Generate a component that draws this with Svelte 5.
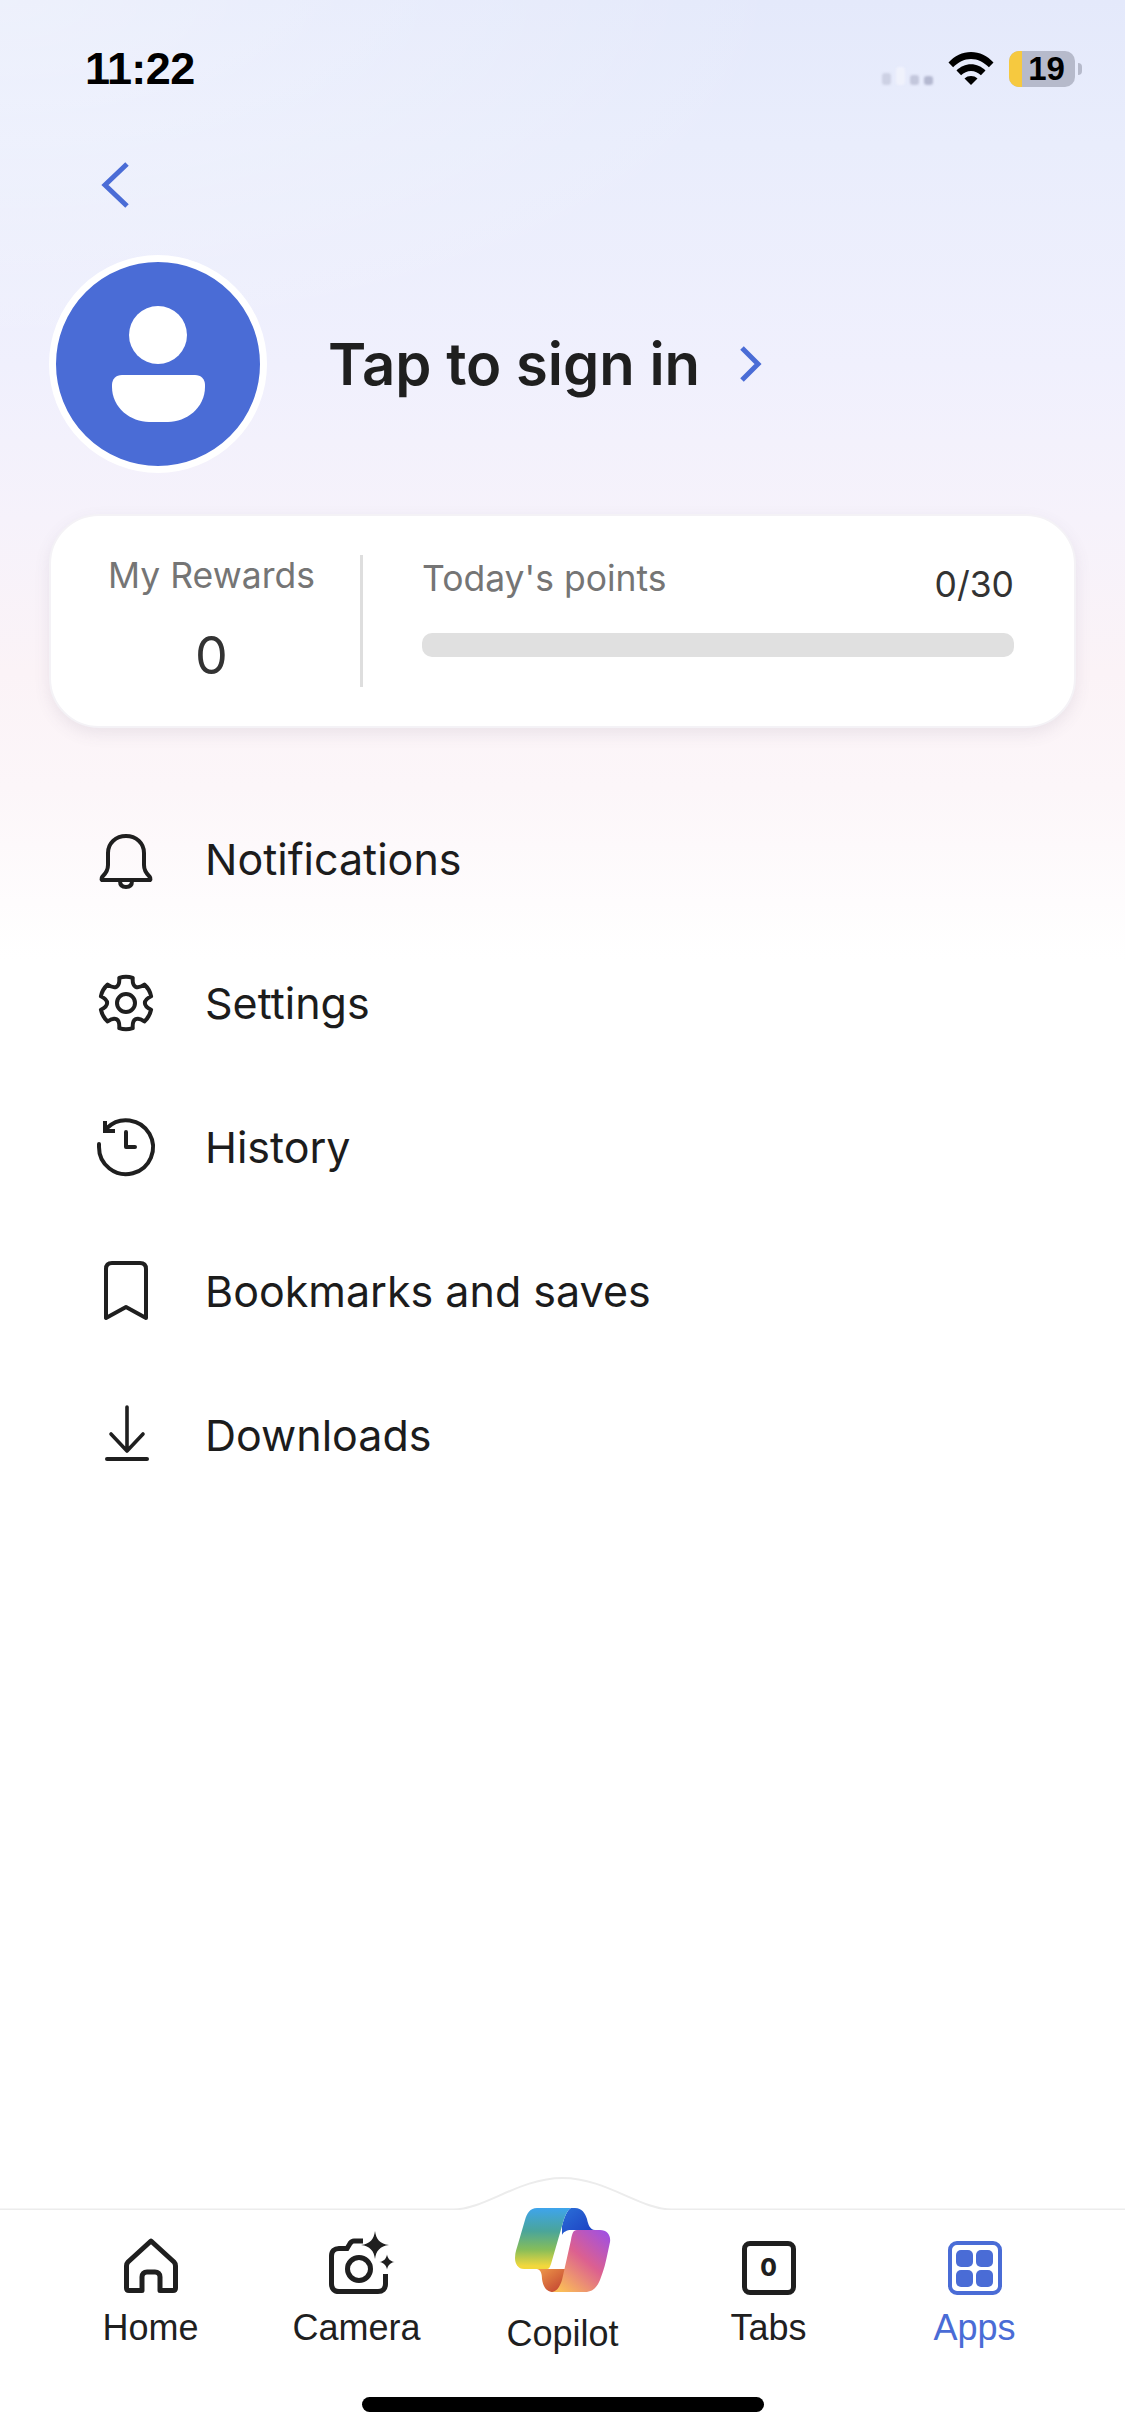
<script>
  const rows = [
    { label: 'Notifications', icon: 'bell' },
    { label: 'Settings', icon: 'gear' },
    { label: 'History', icon: 'history' },
    { label: 'Bookmarks and saves', icon: 'bookmark' },
    { label: 'Downloads', icon: 'download' }
  ];
  const polar = (r, deg) => {
    const t = (deg * Math.PI) / 180;
    return (30 + r * Math.cos(t)).toFixed(2) + ' ' + (30 + r * Math.sin(t)).toFixed(2);
  };
  const gearPath = (() => {
    let d = 'M' + polar(26, -90 - 15);
    for (let i = 0; i < 6; i++) {
      const a = -90 + i * 60;
      d += 'Q' + polar(27.4, a) + ' ' + polar(26, a + 15);
      d += 'C' + polar(17, a + 21) + ' ' + polar(17, a + 39) + ' ' + polar(26, a + 45);
    }
    return d + 'Z';
  })();
</script>

<div class="page">
  <div class="bg"></div>

  <header class="status">
    <span class="time">11:22</span>
    <div class="status-right">
      <div class="signal"><i class="s1"></i><i class="s2"></i><i class="s3"></i><i class="s4"></i></div>
      <svg class="wifi" width="46" height="34" viewBox="0 0 46 34">
        <path d="M0.5 11.5C6.5 5 14.5 1 23 1s16.5 4 22.5 10.5l-4.6 4.8C36 11.4 29.8 8 23 8S10 11.4 5.100 16.300Z" fill="#000"/>
        <path d="M8.500 19.500C12.300 15.700 17.500 13.300 23 13.300s10.700 2.400 14.500 6.200l-4.600 4.700C30.200 21.700 26.800 20 23 20s-7.200 1.700-9.900 4.200Z" fill="#000"/>
        <path d="M16.500 27.500C18.300 25.800 20.500 25 23 25s4.700 .8 6.500 2.500L23 34Z" fill="#000"/>
      </svg>
      <div class="battery">
        <div class="batt-body"><span class="batt-fill"></span><span class="batt-num">19</span></div>
        <span class="batt-cap"></span>
      </div>
    </div>
  </header>

  <button class="back" aria-label="Back">
    <svg width="30" height="46" viewBox="0 0 30 46" fill="none"><path d="M27 2 5 23l22 21" stroke="#4a6cd6" stroke-width="5"/></svg>
  </button>

  <section class="profile">
    <div class="avatar">
      <svg width="204" height="204" viewBox="0 0 204 204">
        <circle cx="102" cy="73" r="29" fill="#fff"/>
        <path d="M66 113H139C145 113 149 117 149 123V125C149 146 130 160 112 160H93C75 160 56 146 56 125V123C56 117 60 113 66 113Z" fill="#fff"/>
      </svg>
    </div>
    <span class="signin">Tap to sign in</span>
    <svg class="chev" width="24" height="36" viewBox="0 0 24 36" fill="none"><path d="M4 2l16 16L4 34" stroke="#4a6cd6" stroke-width="5"/></svg>
  </section>

  <section class="card">
    <div class="rewards">
      <span class="muted">My Rewards</span>
      <span class="zero">0</span>
    </div>
    <div class="divider"></div>
    <div class="points">
      <div class="points-top">
        <span class="muted">Today's points</span>
        <span class="count">0/30</span>
      </div>
      <div class="bar"></div>
    </div>
  </section>

  <nav class="menu">
    {#each rows as row}
      <div class="row">
        <span class="icon">
          <svg width="60" height="60" viewBox="0 0 60 60" fill="none" stroke="#1f1f1f" stroke-width="4" stroke-linecap="round" stroke-linejoin="round">
            {#if row.icon === 'bell'}
              <path d="M6 51C5 50 6 48 7 47C10 44 12 41 12 36V24C12 14 20 7 30 7S48 14 48 24V36C48 41 50 44 53 47C54 48 55 50 54 51Z"/>
              <path d="M24 52C24 56 26 58 30 58S36 56 36 52"/>
            {:else if row.icon === 'gear'}
              <path d={gearPath}/>
              <circle cx="30" cy="30" r="9"/>
            {:else if row.icon === 'history'}
              <path d="M3 27V30A27 27 0 1 0 11 11"/>
              <path d="M9 4V14H19" stroke-linecap="butt" stroke-linejoin="miter"/>
              <path d="M30 15V30H39"/>
            {:else if row.icon === 'bookmark'}
              <path d="M10 57V8C10 4 12 2 16 2H44C48 2 50 4 50 8V57L30 46Z"/>
            {:else}
              <path d="M31 2V46M15 29 31 46 47 29" stroke-width="3.600"/>
              <path d="M11 54H51"/>
            {/if}
          </svg>
        </span>
        <span class="label">{row.label}</span>
      </div>
    {/each}
  </nav>

  <div class="spacer"></div>

  <footer class="tabbar">
    <svg class="bump" width="1125" height="36" viewBox="0 0 1125 36" fill="none">
      <path d="M0 35.500H453c32 0 66-31.500 109.500-31.500s77.500 31.500 109.500 31.500H1125" stroke="#ececec" stroke-width="2"/>
    </svg>
    <div class="tabs">
      <div class="tab">
        <div class="slot">
          <svg width="60" height="60" viewBox="0 0 60 60" fill="none" stroke="#1f1f1f" stroke-width="5" stroke-linejoin="round">
            <path d="M30 6 7 27C5.500 28.500 5.500 29.500 5.500 31V53C5.500 54.500 6.500 55.500 8 55.500H21V42C21 39 23 37 26 37H34C37 37 39 39 39 42V55.500H52C53.500 55.500 54.500 54.500 54.500 53V31C54.500 29.500 54.500 28.500 53 27Z"/>
          </svg>
        </div>
        <span>Home</span>
      </div>
      <div class="tab">
        <div class="slot">
          <svg class="cam" width="68" height="64" viewBox="0 0 68 64" fill="none" stroke="#1f1f1f" stroke-width="5">
            <path d="M58.500 43V53C58.500 58 55.500 60.500 51 60.500H12C7 60.500 4.500 57.500 4.500 53V25C4.500 20 7.500 17.500 12 17.500H20L23 12.500C24 11 25 10 27 10H36"/>
            <circle cx="32" cy="38" r="11.500"/>
            <path d="M48 0C49 8 53 13 62 14C53 15 49 20 48 28C47 20 43 15 34 14C43 13 47 8 48 0Z" fill="#1f1f1f" stroke="none"/>
            <path d="M60 23.500C60.500 27 63 30.500 67.500 31C63 31.500 60.500 35 60 38.500C59.500 35 57 31.500 52.500 31C57 30.500 59.500 27 60 23.500Z" fill="#1f1f1f" stroke="none"/>
          </svg>
        </div>
        <span>Camera</span>
      </div>
      <div class="tab copilot">
        <div class="slot">
          <svg width="96" height="84" viewBox="0 0 96 84">
            <defs>
              <linearGradient id="cL" x1="0" y1="0" x2="0" y2="1">
                <stop offset="0" stop-color="#3ea4ec"/><stop offset=".38" stop-color="#4aa59a"/>
                <stop offset=".68" stop-color="#86bd5a"/><stop offset=".95" stop-color="#f2d83c"/>
              </linearGradient>
              <linearGradient id="cR" x1="1" y1="0" x2="0.2" y2="1">
                <stop offset="0" stop-color="#9a4eea"/><stop offset=".5" stop-color="#dc6090"/>
                <stop offset="1" stop-color="#fabc58"/>
              </linearGradient>
              <linearGradient id="cT" x1="0" y1="0" x2="1" y2="1">
                <stop offset="0" stop-color="#2a6fd8"/><stop offset="1" stop-color="#1c3cc0"/>
              </linearGradient>
              <linearGradient id="cB" x1="0" y1="0" x2="1" y2="1">
                <stop offset="0" stop-color="#f09a4a"/><stop offset="1" stop-color="#bd3a2e"/>
              </linearGradient>
            </defs>
            <path d="M22 61C26 62 27 66 27 71C28 78 31 84 38 84L45 84L52 61Z" fill="url(#cB)"/>
            <path d="M50 0H60C67 0 70 5 72 11C73 16 75 22 80 22H56C52 22 48 24 47 27V18C49 10 52 2 56 0Z" fill="url(#cT)"/>
            <path d="M22 0H56C52 2 49 10 47 18L36 56C35 59 34 61 32 61H9C3 61 0 56 0 50C0 44 2 40 3 36L10 12C12 5 15 0 22 0Z" fill="url(#cL)"/>
            <path d="M62 22H85C92 22 96 27 95 34L92 48C90 58 88 64 85 72C82 79 78 84 70 84H36C42 84 45 78 47 72L56 32C57 26 58 22 62 22Z" fill="url(#cR)"/>
          </svg>
        </div>
        <span>Copilot</span>
      </div>
      <div class="tab">
        <div class="slot"><div class="tabs-box"><b>0</b></div></div>
        <span>Tabs</span>
      </div>
      <div class="tab active">
        <div class="slot"><div class="apps-box"><i></i><i></i><i></i><i></i></div></div>
        <span>Apps</span>
      </div>
    </div>
    <div class="home-indicator"></div>
  </footer>
</div>

<style>
  :global(body) { margin: 0; background: #fff; }
  .page {
    position: relative;
    width: 1125px;
    height: 2436px;
    overflow: hidden;
    display: flex;
    flex-direction: column;
    font-family: Inter, "Liberation Sans", sans-serif;
    color: #1f1f1f;
    background: #fff;
  }
  .bg {
    position: absolute;
    inset: 0 0 auto 0;
    height: 960px;
    background:
      radial-gradient(ellipse 800px 360px at 0 0, rgba(255,255,255,.35), rgba(255,255,255,0)),
      linear-gradient(180deg, #e4e9fb 0%, #e9edfc 15%, #f0f0fd 38%, #f6f2fb 54%, #fbf3f7 70%, #fcf6f9 82%, #ffffff 100%);
  }
  .status, .back, .profile, .card, .menu, .tabbar { position: relative; }

  .status {
    height: 138px;
    box-sizing: border-box;
    padding: 43px 43px 0 85px;
    display: flex;
    justify-content: space-between;
    align-items: flex-start;
  }
  .time {
    font: 700 45px/52px "Liberation Sans", Arial, sans-serif;
    color: #000;
    letter-spacing: -.6px;
  }
  .status-right { display: flex; align-items: flex-end; gap: 15px; margin-top: 8px; height: 36px; }
  .signal { display: flex; align-items: flex-end; gap: 5px; margin-bottom: 2px; filter: blur(.8px); }
  .signal i { display: block; width: 9px; border-radius: 3px; }
  .signal .s1 { height: 12px; background: #cdd1e4; }
  .signal .s2 { height: 18px; background: #f0f2fc; }
  .signal .s3 { height: 10px; background: #c3c7dc; }
  .signal .s4 { height: 9px; background: #b4b8d0; }
  .wifi { margin-bottom: 2px; display: block; }
  .battery { display: flex; align-items: center; gap: 3px; }
  .batt-body {
    position: relative;
    width: 66px;
    height: 36px;
    border-radius: 10px;
    background: #b6bacb;
    overflow: hidden;
    display: flex;
    align-items: center;
    justify-content: center;
    padding-left: 9px;
    box-sizing: border-box;
  }
  .batt-fill { position: absolute; left: 0; top: 0; bottom: 0; width: 13px; background: #f6c93f; }
  .batt-num { position: relative; font: 700 33px/36px "Liberation Sans", Arial, sans-serif; color: #000; }
  .batt-cap { width: 4px; height: 12px; border-radius: 0 6px 6px 0; background: #b6bacb; }

  .back {
    width: 60px;
    height: 60px;
    margin: 17px 0 0 85px;
    padding: 0 0 0 15px;
    border: 0;
    background: none;
    display: flex;
    align-items: center;
    justify-content: flex-start;
  }
  .profile {
    display: flex;
    align-items: center;
    margin: 40px 0 0 49px;
  }
  .avatar {
    width: 204px;
    height: 204px;
    border-radius: 50%;
    background: #4a6cd6;
    border: 7px solid #fff;
    flex: none;
  }
  .avatar svg { display: block; }
  .signin {
    margin-left: 61px;
    font-size: 58px;
    font-weight: 600;
    line-height: 70px;
    color: #1f1f1f;
  }
  .chev { margin-left: 38px; }

  .card {
    margin: 41px 49px 0 49px;
    height: 214px;
    box-sizing: border-box;
    border-radius: 50px;
    background: #fff;
    border: 2px solid #f4f2f6;
    box-shadow: 0 6px 16px rgba(90, 80, 110, .1);
    display: flex;
    align-items: flex-start;
  }
  .rewards {
    width: 309px;
    flex: none;
    display: flex;
    flex-direction: column;
    align-items: center;
    padding: 39px 0 0 12px;
    box-sizing: border-box;
  }
  .muted { font-size: 35.5px; line-height: 42px; color: #757575; }
  .zero { margin-top: 29px; font-size: 52px; line-height: 60px; color: #333; }
  .divider { width: 3px; height: 132px; margin-top: 39px; background: #dedede; flex: none; }
  .points { flex: 1; padding: 42px 60px 0 59px; min-width: 0; }
  .points-top { display: flex; justify-content: space-between; align-items: flex-start; }
  .count { font-size: 35.5px; line-height: 42px; margin-top: 6px; color: #333; }
  .bar { height: 24px; border-radius: 10px; background: #e0e0e0; margin-top: 27px; }

  .menu { margin-top: 59px; padding-left: 96px; display: flex; flex-direction: column; }
  .row { height: 144px; display: flex; align-items: center; }
  .icon { width: 60px; height: 60px; display: block; flex: none; }
  .icon svg { display: block; overflow: visible; }
  .label { margin-left: 49px; font-size: 43px; line-height: 60px; font-weight: 400; color: #1c1c1c; }

  .spacer { flex: 1; }

  .tabbar { height: 226px; }
  .bump { position: absolute; left: 0; top: -36px; display: block; }
  .tabs { display: flex; justify-content: center; }
  .tab {
    width: 206px;
    display: flex;
    flex-direction: column;
    align-items: center;
    font: 400 36px/44px "Liberation Sans", Arial, sans-serif;
    color: #1f1f1f;
    padding-top: 25px;
    box-sizing: border-box;
  }
  .slot {
    height: 60px;
    display: flex;
    align-items: flex-end;
    justify-content: center;
    margin-bottom: 11px;
  }
  .slot svg { display: block; flex: none; }
  .cam { margin-left: 8px; }
  .copilot .slot { margin-bottom: 17px; }
  .copilot svg { margin-bottom: 3px; }
  .tabs-box {
    box-sizing: border-box;
    width: 54px;
    height: 54px;
    border: 5.5px solid #1f1f1f;
    border-radius: 8px;
    display: flex;
    align-items: center;
    justify-content: center;
    font: 800 24px/24px Inter, sans-serif;
  }
  .tabs-box b { font-weight: 800; }
  .apps-box {
    box-sizing: border-box;
    width: 54px;
    height: 54px;
    border: 4px solid #4a6cd6;
    border-radius: 9px;
    display: grid;
    grid-template-columns: 1fr 1fr;
    gap: 3px;
    padding: 4.5px;
  }
  .apps-box i { display: block; background: #4a6cd6; border-radius: 5px; }
  .active { color: #4a6cd6; }
  .home-indicator {
    width: 402px;
    height: 15px;
    border-radius: 8px;
    background: #000;
    position: absolute;
    left: 362px;
    bottom: 24px;
  }
</style>
